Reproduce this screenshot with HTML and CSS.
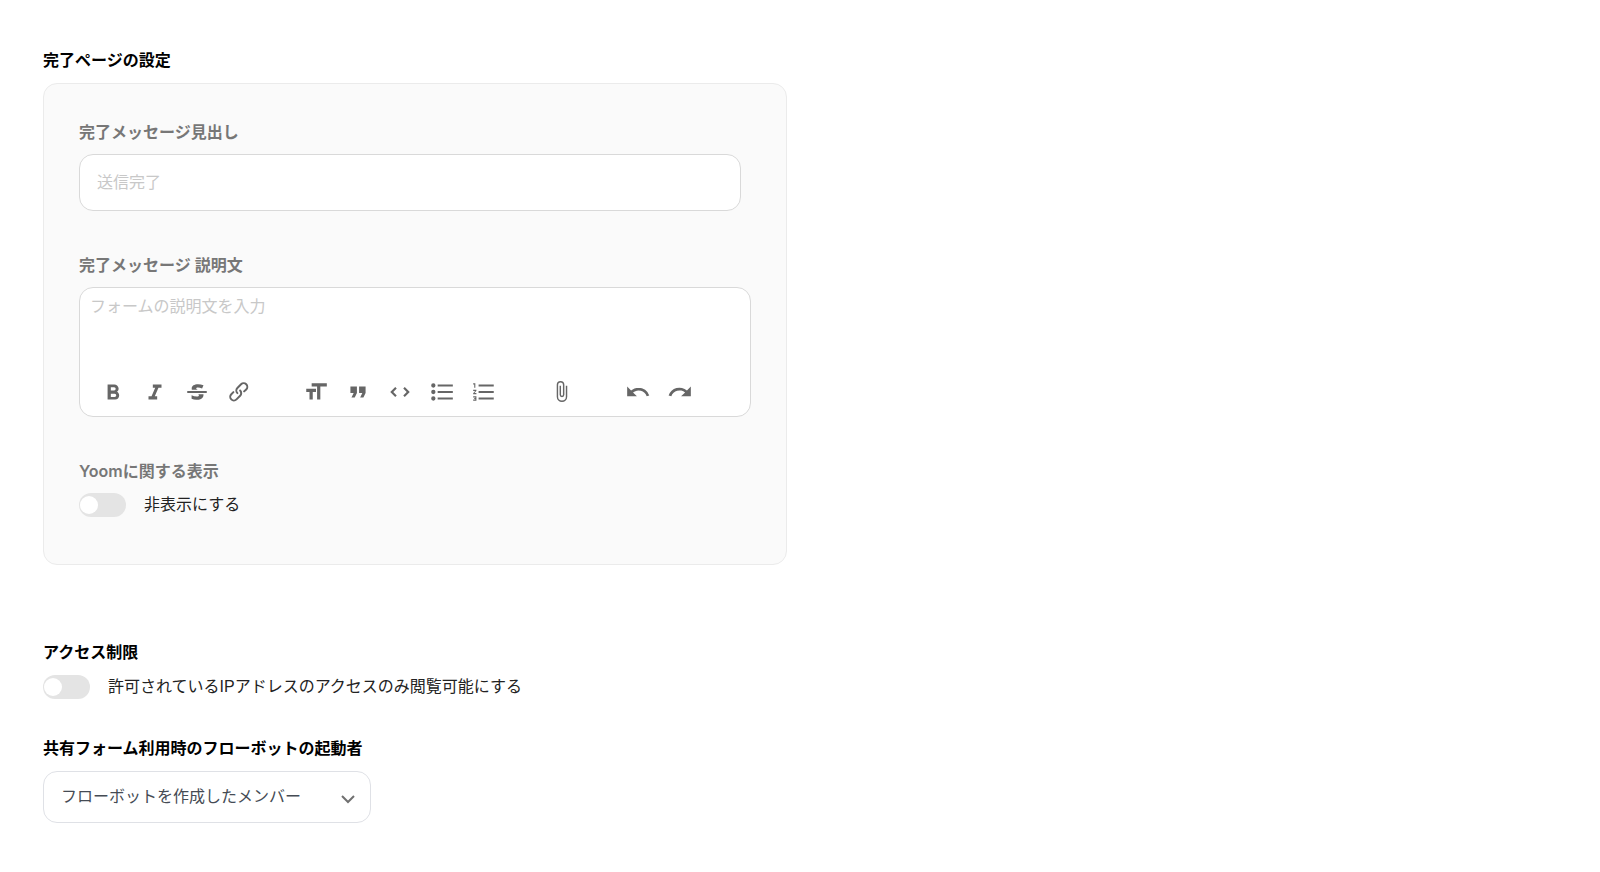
FILE: index.html
```
<!DOCTYPE html>
<html lang="ja">
<head>
<meta charset="utf-8">
<meta name="viewport" content="width=device-width, initial-scale=1">
<title>フォーム設定</title>
<link rel="stylesheet" href="styles.css">
</head>
<body>
<main class="settings">
  <section class="section">
    <h2 class="section-title">完了ページの設定</h2>
    <div class="card">
      <div class="field">
        <label class="field-label" for="done-title">完了メッセージ見出し</label>
        <input class="text-input" id="done-title" type="text" placeholder="送信完了">
      </div>
      <div class="field">
        <label class="field-label" for="done-body">完了メッセージ 説明文</label>
        <div class="editor">
          <textarea class="editor-text" id="done-body" placeholder="フォームの説明文を入力"></textarea>
          <div class="toolbar" role="toolbar" aria-label="書式">
            <div class="tool-group">
              <button class="tool" type="button" aria-label="太字"><svg class="icon" viewBox="0 0 24 24"><path d="M15.6 11.8c1-.7 1.6-1.8 1.6-2.8a4 4 0 0 0-4-4H7v14h7c2.1 0 3.7-1.7 3.7-3.8 0-1.5-.8-2.8-2.1-3.4zM10 7.5h3a1.5 1.5 0 1 1 0 3h-3v-3zm3.5 9H10v-3h3.5a1.5 1.5 0 1 1 0 3z"/></svg></button>
              <button class="tool" type="button" aria-label="斜体"><svg class="icon" viewBox="0 0 24 24"><path d="M10 5v3h2.2l-3.4 8H6v3h8v-3h-2.2l3.4-8H18V5z"/></svg></button>
              <button class="tool" type="button" aria-label="取り消し線"><svg class="icon" viewBox="0 0 24 24"><path d="M12.73 14l.28.14c.26.15.45.3.57.44.12.14.18.3.18.5 0 .3-.15.56-.44.75-.3.2-.76.3-1.39.3A13.52 13.52 0 0 1 7 14.95v3.37a10.64 10.64 0 0 0 4.84.88c1.26 0 2.35-.19 3.28-.56.93-.37 1.64-.9 2.14-1.57s.74-1.45.74-2.32c0-.26-.02-.51-.06-.75h-5.21zm-5.5-4c-.08-.34-.12-.7-.12-1.1 0-1.29.52-2.3 1.58-3.02 1.05-.72 2.5-1.08 4.34-1.08 1.62 0 3.28.34 4.97 1l-1.3 2.93c-1.47-.6-2.73-.9-3.8-.9-.55 0-.96.08-1.2.26-.26.17-.38.38-.38.64 0 .27.16.52.48.74.17.12.53.3 1.05.53H7.23zM3 13h18v-2H3v2z"/></svg></button>
              <button class="tool" type="button" aria-label="リンク"><svg class="icon" viewBox="0 0 24 24"><path d="M9.88 13.7a4.3 4.3 0 0 1 0-6.07l3.37-3.37a4.26 4.26 0 0 1 6.07 0 4.3 4.3 0 0 1 0 6.06l-1.96 1.72a.91.91 0 1 1-1.3-1.3l1.97-1.71a2.46 2.46 0 0 0-3.48-3.48l-3.38 3.37a2.46 2.46 0 0 0 0 3.48.91.91 0 1 1-1.3 1.3z"/><path d="M4.25 19.46a4.3 4.3 0 0 1 0-6.07l1.93-1.9a.91.91 0 1 1 1.3 1.3l-1.93 1.9a2.46 2.46 0 0 0 3.48 3.48l3.37-3.38c.96-.96.96-2.52 0-3.48a.91.91 0 1 1 1.3-1.3 4.3 4.3 0 0 1 0 6.07l-3.38 3.38a4.26 4.26 0 0 1-6.07 0z"/></svg></button>
            </div>
            <div class="tool-group">
              <button class="tool" type="button" aria-label="見出し"><svg class="icon" viewBox="0 0 24 24"><path d="M12 9v3H9v7H6v-7H3V9h9zM8 4h14v3h-6v12h-3V7H8V4z"/></svg></button>
              <button class="tool" type="button" aria-label="引用"><svg class="icon" viewBox="0 0 24 24"><path d="M6 17h3l2-4V7H5v6h3zm8 0h3l2-4V7h-6v6h3z"/></svg></button>
              <button class="tool" type="button" aria-label="コード"><svg class="icon" viewBox="0 0 24 24"><path d="M18.2 12L15 15.2l1.4 1.4L21 12l-4.6-4.6L15 8.8l3.2 3.2zM5.8 12L9 8.8 7.6 7.4 3 12l4.6 4.6L9 15.2 5.8 12z"/></svg></button>
              <button class="tool" type="button" aria-label="箇条書き"><svg class="icon" viewBox="0 0 24 24"><path d="M4 4a2 2 0 1 0 0 4 2 2 0 0 0 0-4zm0 6a2 2 0 1 0 0 4 2 2 0 0 0 0-4zm0 6a2 2 0 1 0 0 4 2 2 0 0 0 0-4zm4 3h14v-2H8v2zm0-6h14v-2H8v2zm0-8v2h14V5H8z"/></svg></button>
              <button class="tool" type="button" aria-label="番号付きリスト"><svg class="icon" viewBox="0 0 24 24"><path d="M2 17h2v.5H3v1h1v.5H2v1h3v-4H2v1zm1-9h1V4H2v1h1v3zm-1 3h1.8L2 13.1v.9h3v-1H3.2L5 10.9V10H2v1zm5-6v2h14V5H7zm0 14h14v-2H7v2zm0-6h14v-2H7v2z"/></svg></button>
            </div>
            <div class="tool-group">
              <button class="tool" type="button" aria-label="ファイルを添付"><svg class="icon icon-small" viewBox="0 0 24 24"><path d="M16.5 6v11.5a4 4 0 1 1-8 0V5a2.5 2.5 0 0 1 5 0v10.5a1 1 0 1 1-2 0V6H10v9.5a2.5 2.5 0 0 0 5 0V5a4 4 0 1 0-8 0v12.5a5.5 5.5 0 0 0 11 0V6h-1.5z"/></svg></button>
            </div>
            <div class="tool-group">
              <button class="tool" type="button" aria-label="元に戻す"><svg class="icon" viewBox="0 0 24 24"><path d="M12.5 8c-2.6 0-5 1-6.9 2.6L2 7v9h9l-3.6-3.6A8 8 0 0 1 20 16l2.4-.8a10.5 10.5 0 0 0-10-7.2z"/></svg></button>
              <button class="tool" type="button" aria-label="やり直す"><svg class="icon" viewBox="0 0 24 24"><path d="M18.4 10.6a10.5 10.5 0 0 0-16.9 4.6L4 16a8 8 0 0 1 12.7-3.6L13 16h9V7l-3.6 3.6z"/></svg></button>
            </div>
          </div>
        </div>
      </div>
      <div class="field">
        <h3 class="field-label">Yoomに関する表示</h3>
        <label class="switch-row"><input class="switch" type="checkbox" role="switch">非表示にする</label>
      </div>
    </div>
  </section>

  <section class="section access">
    <h2 class="section-title">アクセス制限</h2>
    <label class="switch-row"><input class="switch" type="checkbox" role="switch">許可されているIPアドレスのアクセスのみ閲覧可能にする</label>
  </section>

  <section class="section starter">
    <label class="section-title" for="starter">共有フォーム利用時のフローボットの起動者</label>
    <div class="select-box">
      <select class="select" id="starter">
        <option>フローボットを作成したメンバー</option>
      </select>
      <svg class="chevron" viewBox="0 0 14 10"><path d="M1 2l6 6 6-6"/></svg>
    </div>
  </section>
</main>
</body>
</html>
```
FILE: styles.css
```
* {
  box-sizing: border-box;
}

body {
  margin: 0;
  background: #fff;
  color: #222;
  font: 16px/24px "Liberation Sans", "Noto Sans CJK JP", sans-serif;
}

button,
input,
select,
textarea {
  margin: 0;
  font: inherit;
  color: inherit;
}

.settings {
  max-width: 830px;
  padding: 49px 43px;
}

.section {
  display: flex;
  flex-direction: column;
  align-items: flex-start;
  gap: 10px;
}

.section-title {
  margin: 0;
  font-size: 16px;
  font-weight: 700;
  color: #000;
}

.access {
  margin-top: 76px;
}

.starter {
  margin-top: 38px;
}

.card {
  display: flex;
  flex-direction: column;
  gap: 42px;
  width: 100%;
  padding: 36px 35px 47px;
  border: 1px solid #ebebeb;
  border-radius: 14px;
  background: #fafafa;
}

.field {
  display: flex;
  flex-direction: column;
  gap: 10px;
}

.field-label {
  margin: 0;
  font-family: Inter, "Noto Sans CJK JP", sans-serif;
  font-size: 16px;
  font-weight: 600;
  color: #777;
}

.text-input {
  height: 57px;
  margin-right: 10px;
  padding: 0 17px;
  border: 1px solid #d9d9d9;
  border-radius: 14px;
  background: #fff;
}

.text-input::placeholder,
.editor-text::placeholder {
  color: #c8c8c8;
  opacity: 1;
}

.editor {
  border: 1px solid #d9d9d9;
  border-radius: 14px;
  background: #fff;
}

.editor-text {
  display: block;
  width: 100%;
  height: 90px;
  padding: 7px 10px;
  border: 0;
  background: none;
  resize: none;
}

.toolbar {
  display: flex;
  flex-wrap: wrap;
  gap: 35px;
  padding: 0 12px 11px;
}

.tool-group {
  display: flex;
}

.tool {
  display: flex;
  align-items: center;
  justify-content: center;
  width: 42px;
  height: 27px;
  padding: 0;
  border: 0;
  background: none;
  color: #666;
  cursor: pointer;
}

.icon {
  width: 26px;
  height: 26px;
  fill: currentColor;
}

.icon-small {
  width: 23px;
  height: 23px;
}

.switch-row {
  display: flex;
  align-items: center;
  gap: 18px;
}

.switch {
  appearance: none;
  display: flex;
  flex: none;
  align-items: center;
  width: 47px;
  height: 24px;
  padding: 0 1px;
  border-radius: 12px;
  background: #e4e4e4;
}

.switch::before {
  content: "";
  width: 18px;
  height: 18px;
  border-radius: 50%;
  background: #fff;
}

.switch:checked {
  justify-content: flex-end;
}

.select-box {
  position: relative;
  width: 100%;
  max-width: 328px;
}

.select {
  appearance: none;
  width: 100%;
  height: 52px;
  padding: 0 40px 0 17px;
  border: 1px solid #dfe1e6;
  border-radius: 14px;
  background: #fff;
  color: #454b54;
}

.chevron {
  position: absolute;
  top: 23px;
  right: 16px;
  width: 14px;
  height: 10px;
  fill: none;
  stroke: #707070;
  stroke-width: 2;
  pointer-events: none;
}
```
